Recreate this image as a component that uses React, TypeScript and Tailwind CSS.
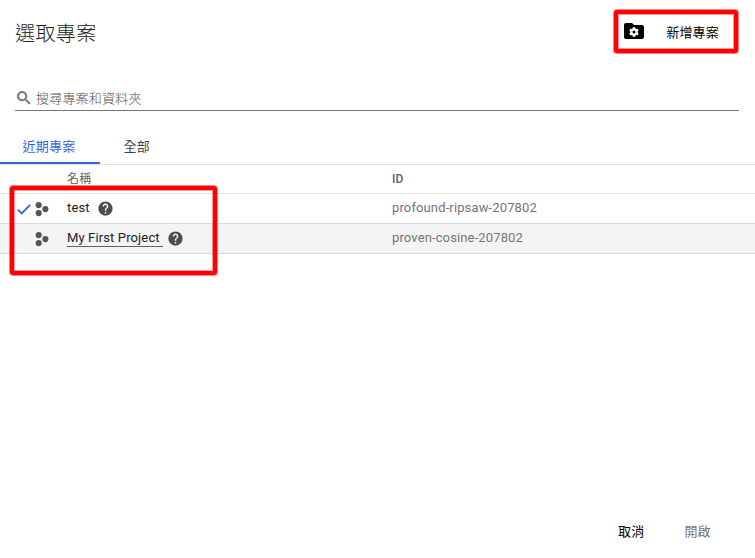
import React from "react";

const HELP =
  "M12 2C6.48 2 2 6.48 2 12s4.48 10 10 10 10-4.48 10-10S17.52 2 12 2zm1 17h-2v-2h2v2zm2.07-7.75l-.9.92C13.45 12.9 13 13.5 13 15h-2v-.5c0-1.1.45-2.1 1.17-2.83l1.24-1.26c.37-.36.59-.86.59-1.41 0-1.1-.9-2-2-2s-2 .9-2 2H8c0-2.21 1.79-4 4-4s4 1.79 4 4c0 .88-.36 1.68-.93 2.25z";
const SEARCH =
  "M15.5 14h-.79l-.28-.27C15.41 12.59 16 11.11 16 9.5 16 5.91 13.09 3 9.5 3S3 5.91 3 9.5 5.91 16 9.5 16c1.61 0 3.09-.59 4.23-1.57l.27.28v.79l5 4.99L20.49 19l-4.99-5zm-6 0C7.01 14 5 11.99 5 9.5S7.01 5 9.5 5 14 7.01 14 9.5 11.99 14 9.5 14z";

function HelpIcon() {
  return (
    <svg className="mb-px size-[17px] shrink-0 text-[#4d4d4d]" viewBox="0 0 24 24" fill="currentColor">
      <path d={HELP} />
    </svg>
  );
}

function ProjectIcon() {
  return (
    <svg className="h-[15px] w-[14px] shrink-0" viewBox="0 0 14 15" fill="#555">
      <circle cx="3.7" cy="3.1" r="3.1" />
      <circle cx="10.4" cy="7.1" r="3.1" />
      <circle cx="3.7" cy="11.1" r="3.1" />
    </svg>
  );
}

function FolderGear() {
  return (
    <svg className="mb-0.5 h-[16px] w-[20px] shrink-0" viewBox="0 0 20 16">
      <path d="M2 0h6l2 2h8a2 2 0 0 1 2 2v10a2 2 0 0 1-2 2H2a2 2 0 0 1-2-2V2a2 2 0 0 1 2-2z" />
      <g fill="#fff" transform="translate(10 9)">
        <circle r="3.7" />
        <rect x="-1.2" y="-4.8" width="2.4" height="9.6" />
        <rect x="-1.2" y="-4.8" width="2.4" height="9.6" transform="rotate(60)" />
        <rect x="-1.2" y="-4.8" width="2.4" height="9.6" transform="rotate(120)" />
      </g>
      <circle cx="10" cy="9" r="1.5" />
    </svg>
  );
}

const projects = [
  { name: "test", id: "profound-ripsaw-207802", selected: true },
  { name: "My First Project", id: "proven-cosine-207802", selected: false },
];

export default function App() {
  return (
    <div className="relative flex h-[558px] w-[755px] flex-col overflow-hidden bg-white font-[Roboto,'Noto_Sans_CJK_TC',sans-serif] text-[13px] tracking-[0.2px] text-[#212121]">
      <header className="flex h-[66px] shrink-0 items-center justify-between pr-[36px] pl-[15px]">
        <h1 className="pt-0.5 text-[20px] leading-6 font-light tracking-[0.4px]">選取專案</h1>
        <button className="flex items-center gap-[22px] pb-0.5 leading-5 text-black">
          <FolderGear />
          <span className="pt-px">新增專案</span>
        </button>
      </header>

      <div className="mr-4 ml-[15px] mt-[20px] flex h-[25px] shrink-0 items-center border-b border-[#757575] text-[#757575]">
        <svg className="mr-[3px] size-[18px]" viewBox="0 0 24 24" fill="currentColor" stroke="currentColor" strokeWidth=".8">
          <path d={SEARCH} />
        </svg>
        <span className="pt-px leading-5 font-light text-[#555]">搜尋專案和資料夾</span>
      </div>

      <nav className="mt-[17px] flex h-[37px] shrink-0 border-b border-[#e0e0e0]">
        <div className="flex h-9 w-[100px] items-center justify-center border-b-2 border-[#3367d6] pt-[3px] pr-0.5 text-[#3367d6]">近期專案</div>
        <div className="flex h-9 items-center border-b-2 border-transparent pt-[3px] pl-[23.5px] text-[#424242]">全部</div>
      </nav>

      <div className="grid h-[29px] shrink-0 grid-cols-[67px_325px_1fr] items-center border-b border-[#e0e0e0] text-[12px] text-[#616161]">
        <span className="col-start-2">名稱</span>
        <span className="font-medium">ID</span>
      </div>

      {projects.map((p) => (
        <div
          key={p.id}
          className={
            "grid h-[30px] shrink-0 grid-cols-[67px_325px_1fr] items-center border-b border-[#dadada] tracking-[0.13px] " +
            (p.selected ? "bg-white" : "bg-[#f4f4f4]")
          }
        >
          <div className="flex h-full items-center justify-end pt-0.5 pr-[18px]">
            {p.selected && (
              <svg className="mr-1 h-[11px] w-[14px]" viewBox="0 0 14 11" fill="none" stroke="#3367d6" strokeWidth="1.8">
                <path d="M.8 5.6 4.7 9.4 13.1 .8" />
              </svg>
            )}
            <ProjectIcon />
          </div>
          <div className="flex items-center">
            <span className={p.selected ? "mr-[7px] pb-0.5 leading-4" : "mr-1 -mt-px border-b border-[#616161] pr-[3px] pb-px leading-[15px]"}>{p.name}</span>
            <HelpIcon />
          </div>
          <span className="pb-px text-[#757575]">{p.id}</span>
        </div>
      ))}

      <footer className="mt-auto mb-4 flex gap-[40px] pl-[618px] leading-5">
        <button className="text-black">取消</button>
        <button className="text-[#757575]">開啟</button>
      </footer>

      <div className="absolute top-[10px] left-[614px] h-[43px] w-[124px] rounded-[3px] border-4 border-[#ff0000] ring-1 ring-[#ff0000]/50 inset-ring-1 inset-ring-[#ff0000]/40" />
      <div className="absolute top-[186px] left-[10px] h-[89px] w-[207px] rounded-[3px] border-4 border-[#ff0000] ring-1 ring-[#ff0000]/50 inset-ring-1 inset-ring-[#ff0000]/40" />
    </div>
  );
}
